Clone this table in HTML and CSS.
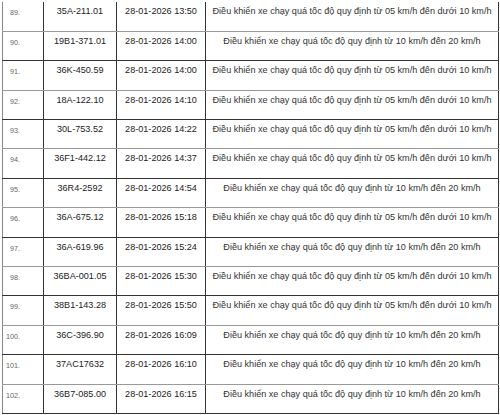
FILE: index.html
```html
<!DOCTYPE html>
<html lang="vi">
<head>
  <meta charset="UTF-8">
  <title>Danh sách vi phạm</title>
  <link rel="stylesheet" href="styles.css">
</head>
<body>
  <table class="violations">
    <colgroup>
      <col class="c-num">
      <col class="c-plate">
      <col class="c-time">
      <col class="c-desc">
    </colgroup>
    <tbody>
      <tr><td class="num">89.</td><td class="plate">35A-211.01</td><td class="time">28-01-2026 13:50</td><td class="desc">Điều khiển xe chạy quá tốc độ quy định từ 05 km/h đến dưới 10 km/h</td></tr>
      <tr><td class="num">90.</td><td class="plate">19B1-371.01</td><td class="time">28-01-2026 14:00</td><td class="desc">Điều khiển xe chạy quá tốc độ quy định từ 10 km/h đến 20 km/h</td></tr>
      <tr><td class="num">91.</td><td class="plate">36K-450.59</td><td class="time">28-01-2026 14:00</td><td class="desc">Điều khiển xe chạy quá tốc độ quy định từ 05 km/h đến dưới 10 km/h</td></tr>
      <tr><td class="num">92.</td><td class="plate">18A-122.10</td><td class="time">28-01-2026 14:10</td><td class="desc">Điều khiển xe chạy quá tốc độ quy định từ 05 km/h đến dưới 10 km/h</td></tr>
      <tr><td class="num">93.</td><td class="plate">30L-753.52</td><td class="time">28-01-2026 14:22</td><td class="desc">Điều khiển xe chạy quá tốc độ quy định từ 05 km/h đến dưới 10 km/h</td></tr>
      <tr><td class="num">94.</td><td class="plate">36F1-442.12</td><td class="time">28-01-2026 14:37</td><td class="desc">Điều khiển xe chạy quá tốc độ quy định từ 05 km/h đến dưới 10 km/h</td></tr>
      <tr><td class="num">95.</td><td class="plate">36R4-2592</td><td class="time">28-01-2026 14:54</td><td class="desc">Điều khiển xe chạy quá tốc độ quy định từ 10 km/h đến 20 km/h</td></tr>
      <tr><td class="num">96.</td><td class="plate">36A-675.12</td><td class="time">28-01-2026 15:18</td><td class="desc">Điều khiển xe chạy quá tốc độ quy định từ 05 km/h đến dưới 10 km/h</td></tr>
      <tr><td class="num">97.</td><td class="plate">36A-619.96</td><td class="time">28-01-2026 15:24</td><td class="desc">Điều khiển xe chạy quá tốc độ quy định từ 10 km/h đến 20 km/h</td></tr>
      <tr><td class="num">98.</td><td class="plate">36BA-001.05</td><td class="time">28-01-2026 15:30</td><td class="desc">Điều khiển xe chạy quá tốc độ quy định từ 05 km/h đến dưới 10 km/h</td></tr>
      <tr><td class="num">99.</td><td class="plate">38B1-143.28</td><td class="time">28-01-2026 15:50</td><td class="desc">Điều khiển xe chạy quá tốc độ quy định từ 05 km/h đến dưới 10 km/h</td></tr>
      <tr><td class="num wide">100.</td><td class="plate">36C-396.90</td><td class="time">28-01-2026 16:09</td><td class="desc">Điều khiển xe chạy quá tốc độ quy định từ 10 km/h đến 20 km/h</td></tr>
      <tr><td class="num wide">101.</td><td class="plate">37AC17632</td><td class="time">28-01-2026 16:10</td><td class="desc">Điều khiển xe chạy quá tốc độ quy định từ 10 km/h đến 20 km/h</td></tr>
      <tr><td class="num wide">102.</td><td class="plate">36B7-085.00</td><td class="time">28-01-2026 16:15</td><td class="desc">Điều khiển xe chạy quá tốc độ quy định từ 10 km/h đến 20 km/h</td></tr>
    </tbody>
  </table>
</body>
</html>
```

FILE: styles.css
```css
body, html {
  margin: 0;
  padding: 0;
  background-color: white;
  font-family: 'Liberation Sans', Arial, sans-serif;
}

.violations {
  border-collapse: collapse;
  table-layout: fixed;
  width: 496px;
  margin: 2px 0 0 2px;
}

.c-num { width: 41px; }
.c-plate { width: 73px; }
.c-time { width: 89px; }
.c-desc { width: 293px; }

.violations td {
  height: 29.4px;
  box-sizing: border-box;
  padding: 4px 2px 0;
  vertical-align: top;
  border: 1px solid #333;
  font-size: 9.1px;
  line-height: 11px;
  color: #222;
  text-align: center;
  white-space: nowrap;
  overflow: hidden;
}

.violations tr:first-child td {
  border-top: none;
}

.violations tr:nth-child(odd) td {
  border-bottom-color: #999;
}

.violations td:first-child,
.violations td.time {
  border-left-color: #888;
}

.violations td.num {
  text-align: left;
  padding-left: 7px;
  padding-top: 5px;
  font-size: 7.2px;
  color: #666;
}

.violations td.num.wide {
  padding-left: 3px;
}

.violations td.desc {
  color: #333;
}
```
